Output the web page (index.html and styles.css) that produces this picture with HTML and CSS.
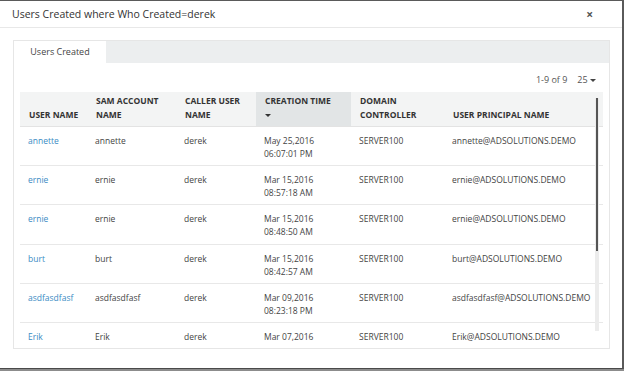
FILE: index.html
```html
<!DOCTYPE html>
<html lang="en">
<head>
  <meta charset="UTF-8">
  <title>Users Created where Who Created=derek</title>
  <link rel="stylesheet" href="styles.css">
</head>
<body>
  <div class="modal">
    <div class="modal-header">
      <span class="modal-title">Users Created where Who Created=derek</span>
      <span class="close">&times;</span>
    </div>

    <div class="modal-body">
      <div class="panel">
        <div class="tabs">
          <div class="tab active">Users Created</div>
        </div>

        <div class="toolbar">
          <span class="count">1-9 of 9</span>
          <span class="page-size">25 <span class="caret"></span></span>
        </div>

        <div class="table-wrap">
          <table class="grid">
            <colgroup>
              <col style="width:67px">
              <col style="width:89px">
              <col style="width:80px">
              <col style="width:95px">
              <col style="width:93px">
              <col style="width:159px">
            </colgroup>
            <thead>
              <tr>
                <th class="nowrap">USER NAME</th>
                <th>SAM ACCOUNT NAME</th>
                <th>CALLER USER NAME</th>
                <th class="sorted">CREATION TIME<br><span class="caret dark"></span></th>
                <th>DOMAIN CONTROLLER</th>
                <th>USER PRINCIPAL NAME</th>
              </tr>
            </thead>
            <tbody>
              <tr>
                <td><a href="#">annette</a></td>
                <td>annette</td>
                <td>derek</td>
                <td>May 25,2016<br>06:07:01 PM</td>
                <td>SERVER100</td>
                <td>annette@ADSOLUTIONS.DEMO</td>
              </tr>
              <tr>
                <td><a href="#">ernie</a></td>
                <td>ernie</td>
                <td>derek</td>
                <td>Mar 15,2016<br>08:57:18 AM</td>
                <td>SERVER100</td>
                <td>ernie@ADSOLUTIONS.DEMO</td>
              </tr>
              <tr>
                <td><a href="#">ernie</a></td>
                <td>ernie</td>
                <td>derek</td>
                <td>Mar 15,2016<br>08:48:50 AM</td>
                <td>SERVER100</td>
                <td>ernie@ADSOLUTIONS.DEMO</td>
              </tr>
              <tr>
                <td><a href="#">burt</a></td>
                <td>burt</td>
                <td>derek</td>
                <td>Mar 15,2016<br>08:42:57 AM</td>
                <td>SERVER100</td>
                <td>burt@ADSOLUTIONS.DEMO</td>
              </tr>
              <tr>
                <td><a href="#">asdfasdfasf</a></td>
                <td>asdfasdfasf</td>
                <td>derek</td>
                <td>Mar 09,2016<br>08:23:18 PM</td>
                <td>SERVER100</td>
                <td>asdfasdfasf@ADSOLUTIONS.DEMO</td>
              </tr>
              <tr>
                <td><a href="#">Erik</a></td>
                <td>Erik</td>
                <td>derek</td>
                <td>Mar 07,2016</td>
                <td>SERVER100</td>
                <td>Erik@ADSOLUTIONS.DEMO</td>
              </tr>
            </tbody>
          </table>

          <!-- scrollbar overlay -->
          <div class="scroll-track"><div class="scroll-thumb"></div></div>
        </div>
      </div>
    </div>
  </div>
</body>
</html>
```

FILE: styles.css
```css
* {
  margin: 0;
  padding: 0;
  box-sizing: border-box;
}
body {
  font-family: "Open Sans", "Liberation Sans", sans-serif;
  background: #8c8c8c;
  color: #444;
}
.modal {
  width: 624px;
  height: 369px;
  background: #fff;
  border-top: 1px solid #5a5a5a;
  border-right: 2px solid #5a5a5a;
  border-bottom: 1px solid #4a4a4a;
}
.modal-header {
  height: 27px;
  padding: 0 29px 0 12px;
  display: flex;
  align-items: center;
  justify-content: space-between;
  border-bottom: 1px solid #e8e8e8;
}
.modal-title {
  font-size: 10.5px;
  color: #333;
}
.close {
  font-size: 12px;
  font-weight: bold;
  color: #555;
}
.modal-body {
  padding: 12px 12px 0 13px;
}
.panel {
  height: 309px;
  border: 1px solid #e6e6e6;
  overflow: hidden;
}
.tabs {
  display: flex;
  height: 22px;
  background: #eceeef;
}
.tab {
  width: 92px;
  font-size: 9px;
  line-height: 22px;
  text-align: center;
  color: #444;
}
.tab.active {
  background: #fff;
}
.toolbar {
  height: 29px;
  padding: 11px 13px 0 0;
  display: flex;
  justify-content: flex-end;
  gap: 10px;
  font-size: 9px;
  line-height: 12px;
  color: #555;
}
.caret {
  display: inline-block;
  width: 0;
  height: 0;
  border-left: 3px solid transparent;
  border-right: 3px solid transparent;
  border-top: 3px solid #444;
  vertical-align: middle;
}
.caret.dark {
  border-top-color: #333;
}
.table-wrap {
  position: relative;
  margin: 0 6px;
}
.grid {
  width: 583px;
  table-layout: fixed;
  border-collapse: collapse;
}
.grid th {
  height: 34px;
  padding: 0 6px 4px 9px;
  background: #f3f4f4;
  border-bottom: 1px solid #e3e3e3;
  text-align: left;
  vertical-align: bottom;
  font-size: 8.5px;
  font-weight: bold;
  line-height: 14px;
  color: #333;
}
.grid th.nowrap {
  white-space: nowrap;
}
.grid th.sorted {
  background: #e2e5e6;
}
.grid td {
  height: 39.4px;
  padding: 7px 6px 0 8px;
  border-bottom: 1px solid #e8e8e8;
  vertical-align: top;
  font-size: 8.5px;
  line-height: 13px;
  color: #444;
  white-space: nowrap;
}
.grid a {
  color: #3b8cc4;
  text-decoration: none;
}
.scroll-track {
  position: absolute;
  left: 575px;
  top: 6px;
  width: 4px;
  height: 233px;
  background: #ececec;
}
.scroll-thumb {
  margin-left: 1px;
  width: 2px;
  height: 153px;
  background: #555;
}
```
